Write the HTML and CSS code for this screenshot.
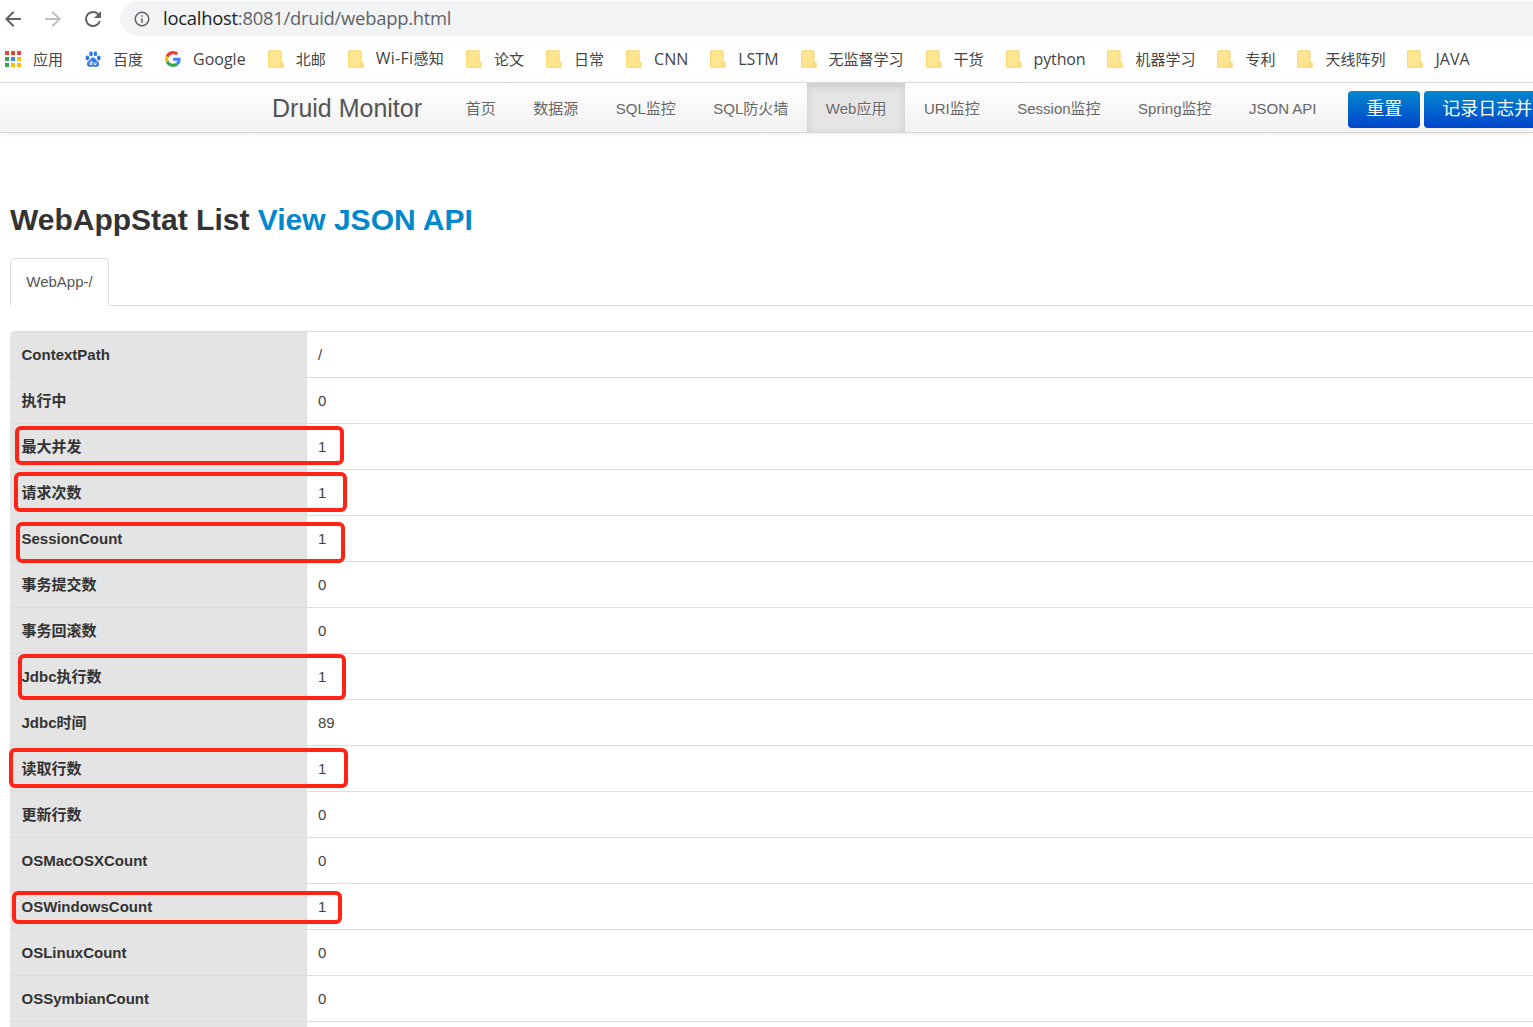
FILE: index.html
```html
<!DOCTYPE html>
<html lang="zh-CN">
<head>
<meta charset="utf-8">
<title>Druid Monitor</title>
<link rel="stylesheet" href="styles.css">
</head>
<body>
<svg class="defs" width="0" height="0">
  <symbol id="folder" viewBox="0 0 16 18">
    <path d="M1.500 .8h10.500a1 1 0 0 1 1 1v10.700h1.200a1 1 0 0 1 1 1v2.700a1 1 0 0 1-1 1H1.500a1 1 0 0 1-1-1V1.800a1 1 0 0 1 1-1z" fill="#fee591" stroke="#fad872" stroke-width="1.200"/>
    <path d="M13 12.500v4.500" stroke="#fad872" stroke-width="1.200" fill="none"/>
  </symbol>
</svg>
<header class="browser">
  <div class="toolbar">
    <svg class="tool-icon" viewBox="0 0 24 24"><path d="M20 11H7.800l5.600-5.600L12 4l-8 8 8 8 1.400-1.400L7.800 13H20z" fill="#5f6368"/></svg>
    <svg class="tool-icon" viewBox="0 0 24 24"><path d="M4 11h12.200l-5.600-5.600L12 4l8 8-8 8-1.400-1.400 5.600-5.600H4z" fill="#bdc1c6"/></svg>
    <svg class="tool-icon" viewBox="0 0 24 24"><path d="M17.650 6.350A7.950 7.950 0 0 0 12 4a8 8 0 1 0 7.730 10h-2.080A6 6 0 1 1 12 6c1.660 0 3.140.69 4.220 1.780L13 11h7V4z" fill="#5f6368"/></svg>
    <div class="omnibox">
      <svg class="info-icon" viewBox="0 0 24 24"><path d="M12 2a10 10 0 1 0 0 20 10 10 0 0 0 0-20zm0 18a8 8 0 1 1 0-16 8 8 0 0 1 0 16zM11 7h2v2h-2zm0 4h2v6h-2z" fill="#5f6368"/></svg>
      <span class="url"><span class="url-host">localhost</span>:8081/druid/webapp.html</span>
    </div>
  </div>
  <div class="bookmarks">
    <a class="bookmark">
      <svg class="bm-icon" viewBox="0 0 16 16">
        <rect x="0" y="0" width="4" height="4" fill="#ea4335"/><rect x="6" y="0" width="4" height="4" fill="#ea4335"/><rect x="12" y="0" width="4" height="4" fill="#ea4335"/>
        <rect x="0" y="6" width="4" height="4" fill="#34a853"/><rect x="6" y="6" width="4" height="4" fill="#4285f4"/><rect x="12" y="6" width="4" height="4" fill="#fbbc05"/>
        <rect x="0" y="12" width="4" height="4" fill="#34a853"/><rect x="6" y="12" width="4" height="4" fill="#fbbc05"/><rect x="12" y="12" width="4" height="4" fill="#fbbc05"/>
      </svg><span class="bm-label">应用</span></a>
    <a class="bookmark">
      <svg class="bm-icon" viewBox="0 0 16 16" fill="#2f78e8">
        <ellipse cx="2.400" cy="7" rx="1.900" ry="2.400"/><ellipse cx="6" cy="2.800" rx="1.800" ry="2.500"/><ellipse cx="10.400" cy="2.800" rx="1.800" ry="2.500"/><ellipse cx="13.800" cy="7" rx="1.900" ry="2.400"/>
        <path d="M8 6.500c-2 0-2.500 2-4 3.200C2.500 11 1.600 12 2 13.800c.4 1.500 2 2.200 3.500 2 1-.1 1.700-.4 2.500-.4s1.500.3 2.500.4c1.500.2 3.100-.5 3.500-2 .4-1.800-.5-2.800-2-4.100C10.500 8.500 10 6.500 8 6.500z"/>
        <path d="M6.800 9.500v4H5v-2h1.800M9 11.200v2.300h2v-2.300" fill="none" stroke="#fff" stroke-width=".9"/>
      </svg><span class="bm-label">百度</span></a>
    <a class="bookmark">
      <svg class="bm-icon" viewBox="0 0 48 48">
        <path fill="#ea4335" d="M24 9.500c3.500 0 6.700 1.300 9.200 3.400l6.800-6.800C35.900 2.400 30.300 0 24 0 14.600 0 6.500 5.400 2.600 13.200l7.900 6.200C12.400 13.700 17.700 9.500 24 9.500z"/>
        <path fill="#4285f4" d="M47 24.500c0-1.600-.1-3.100-.4-4.500H24v9h12.900c-.6 3-2.200 5.500-4.800 7.200l7.700 6c4.500-4.200 7.200-10.300 7.200-17.700z"/>
        <path fill="#fbbc05" d="M10.500 28.600c-.5-1.400-.8-3-.8-4.600s.3-3.200.8-4.600l-7.900-6.200C1 16.400 0 20.100 0 24s1 7.600 2.600 10.800z"/>
        <path fill="#34a853" d="M24 48c6.500 0 11.900-2.100 15.800-5.800l-7.700-6c-2.100 1.400-4.900 2.300-8.100 2.300-6.300 0-11.600-4.200-13.500-9.900l-7.900 6.200C6.500 42.600 14.600 48 24 48z"/>
      </svg><span class="latin">Google</span></a>
    <a class="bookmark"><svg class="bm-folder"><use href="#folder"/></svg><span class="bm-label">北邮</span></a>
    <a class="bookmark"><svg class="bm-folder"><use href="#folder"/></svg><span class="bm-label latin-mixed"><span class="latin-inner">Wi-Fi</span>感知</span></a>
    <a class="bookmark"><svg class="bm-folder"><use href="#folder"/></svg><span class="bm-label">论文</span></a>
    <a class="bookmark"><svg class="bm-folder"><use href="#folder"/></svg><span class="bm-label">日常</span></a>
    <a class="bookmark"><svg class="bm-folder"><use href="#folder"/></svg><span class="latin">CNN</span></a>
    <a class="bookmark"><svg class="bm-folder"><use href="#folder"/></svg><span class="latin">LSTM</span></a>
    <a class="bookmark"><svg class="bm-folder"><use href="#folder"/></svg><span class="bm-label">无监督学习</span></a>
    <a class="bookmark"><svg class="bm-folder"><use href="#folder"/></svg><span class="bm-label">干货</span></a>
    <a class="bookmark"><svg class="bm-folder"><use href="#folder"/></svg><span class="latin latin-tight">python</span></a>
    <a class="bookmark"><svg class="bm-folder"><use href="#folder"/></svg><span class="bm-label">机器学习</span></a>
    <a class="bookmark"><svg class="bm-folder"><use href="#folder"/></svg><span class="bm-label">专利</span></a>
    <a class="bookmark"><svg class="bm-folder"><use href="#folder"/></svg><span class="bm-label">天线阵列</span></a>
    <a class="bookmark"><svg class="bm-folder"><use href="#folder"/></svg><span class="latin">JAVA</span></a>
  </div>
</header>
<nav class="navbar">
  <span class="brand">Druid Monitor</span>
  <ul class="nav">
    <li>首页</li>
    <li>数据源</li>
    <li>SQL监控</li>
    <li>SQL防火墙</li>
    <li class="active">Web应用</li>
    <li>URI监控</li>
    <li>Session监控</li>
    <li>Spring监控</li>
    <li>JSON API</li>
  </ul>
  <div class="actions">
    <a class="btn">重置</a>
    <a class="btn">记录日志并重置</a>
  </div>
</nav>
<main class="content">
  <h2 class="title">WebAppStat List <a class="title-link">View JSON API</a></h2>
  <div class="tabs"><span class="tab">WebApp-/</span></div>
  <table class="stat">
    <tbody>
      <tr><th>ContextPath</th><td>/</td></tr>
      <tr><th class="cjk">执行中</th><td>0</td></tr>
      <tr><th class="cjk">最大并发</th><td>1</td></tr>
      <tr><th class="cjk">请求次数</th><td>1</td></tr>
      <tr><th>SessionCount</th><td>1</td></tr>
      <tr><th class="cjk">事务提交数</th><td>0</td></tr>
      <tr><th class="cjk">事务回滚数</th><td>0</td></tr>
      <tr><th class="cjk">Jdbc执行数</th><td>1</td></tr>
      <tr><th class="cjk">Jdbc时间</th><td>89</td></tr>
      <tr><th class="cjk">读取行数</th><td>1</td></tr>
      <tr><th class="cjk">更新行数</th><td>0</td></tr>
      <tr><th>OSMacOSXCount</th><td>0</td></tr>
      <tr><th>OSWindowsCount</th><td>1</td></tr>
      <tr><th>OSLinuxCount</th><td>0</td></tr>
      <tr><th>OSSymbianCount</th><td>0</td></tr>
      <tr><th>&nbsp;</th><td>&nbsp;</td></tr>
    </tbody>
  </table>
</main>
<div class="mark mark-1"></div>
<div class="mark mark-2"></div>
<div class="mark mark-3"></div>
<div class="mark mark-4"></div>
<div class="mark mark-5"></div>
<div class="mark mark-6"></div>
</body>
</html>
```
FILE: styles.css
```css
html, body {
  margin: 0;
  padding: 0;
  height: 1027px;
  overflow: hidden;
  background: #fff;
}
body {
  position: relative;
  font-family: "Liberation Sans", "Noto Sans CJK SC", sans-serif;
  color: #333;
}
.defs { position: absolute; }

/* browser chrome */
.browser { height: 82px; background: #fff; }
.toolbar {
  height: 38px;
  display: flex;
  align-items: center;
  padding-left: 1px;
  box-sizing: border-box;
}
.tool-icon { width: 24px; height: 24px; margin-right: 16px; flex: none; }
.omnibox {
  flex: 1;
  height: 35px;
  margin-left: -1px;
  margin-top: -1px;
  border-radius: 18px 0 0 18px;
  background: #f1f3f4;
  display: flex;
  align-items: center;
  padding-left: 13px;
}
.info-icon { width: 18px; height: 18px; margin-right: 12px; }
.url {
  font-family: "Open Sans", "Noto Sans", sans-serif;
  font-size: 18.400px;
  letter-spacing: -0.25px;
  color: #5f6368;
  white-space: nowrap;
  padding-bottom: 2px;
}
.url-host { color: #202124; }
.bookmarks {
  height: 42px;
  padding-bottom: 2px;
  display: flex;
  align-items: center;
  padding-left: 5px;
  gap: 22px;
}
.bookmark {
  display: flex;
  align-items: center;
  gap: 12px;
  font-family: "Open Sans", "Noto Sans CJK SC", sans-serif;
  font-size: 15px;
  color: #444;
  white-space: nowrap;
}
.bm-label { padding-bottom: 2px; }
.latin { font-size: 16px; }
.latin-inner { font-size: 16px; }
.latin-tight { letter-spacing: -.15px; }
.latin-mixed { letter-spacing: .3px; }
.bm-icon { width: 16px; height: 16px; flex: none; }
.bm-folder { width: 16px; height: 18px; flex: none; }

/* navbar */
.navbar {
  height: 49px;
  border-top: 1px solid #dadce0;
  border-bottom: 1px solid #d4d4d4;
  background: linear-gradient(#fff, #f2f2f2);
  box-shadow: 0 1px 6px rgba(0, 0, 0, .07);
  display: flex;
  align-items: stretch;
  padding-left: 272px;
  white-space: nowrap;
  overflow: hidden;
}
.brand {
  font-size: 25px;
  line-height: 50px;
  color: #555;
  width: 175px;
  flex: none;
}
.nav {
  list-style: none;
  margin: 0;
  padding: 0;
  display: flex;
  flex: none;
}
.nav li {
  padding: 1px 18.750px 0;
  font-size: 15px;
  line-height: 49px;
  color: #666;
  text-shadow: 0 1px 0 #fff;
}
.nav li.active {
  background: #e5e5e5;
  box-shadow: inset 0 3px 8px rgba(0, 0, 0, .125);
}
.actions {
  display: flex;
  align-items: center;
  gap: 4px;
  margin-left: 13px;
  flex: none;
}
.btn {
  height: 37px;
  line-height: 37px;
  padding: 0 18px;
  margin-top: 4px;
  font-size: 18px;
  color: #fff;
  border-radius: 4px;
  background: linear-gradient(#0088cc, #0044cc);
}

/* content */
.content { padding: 0 0 0 10px; }
.title {
  margin: 67px 0 18px;
  font-size: 30px;
  line-height: 40px;
  font-weight: bold;
  color: #333;
}
.title-link { color: #0088cc; }
.tabs {
  height: 47px;
  border-bottom: 1px solid #ddd;
  margin-bottom: 25px;
}
.tab {
  display: inline-block;
  box-sizing: border-box;
  width: 99px;
  height: 48px;
  line-height: 46px;
  text-align: center;
  font-size: 15px;
  color: #555;
  background: #fff;
  border: 1px solid #ddd;
  border-bottom-color: #fff;
  border-radius: 5px 5px 0 0;
}
.stat {
  width: 100%;
  border-collapse: separate;
  border-spacing: 0;
  table-layout: fixed;
  font-size: 15px;
}
.stat th, .stat td {
  height: 46px;
  box-sizing: border-box;
  padding: 0 11px;
  border-top: 1px solid #ddd;
  text-align: left;
  vertical-align: middle;
}
.stat th {
  width: 297px;
  padding-left: 11.500px;
  background: #e4e4e4;
  color: #333;
  font-weight: bold;
  border-right: 1px solid #ddd;
}
.stat th.cjk { padding-bottom: 2px; }
.stat tr:first-child th { border-top-left-radius: 5px; }
.stat td { color: #444; }

/* annotation boxes drawn over the screenshot */
.mark {
  position: absolute;
  box-sizing: border-box;
  border: 4px solid #ff2416;
  border-radius: 6px;
}
.mark-1 { left: 15px; top: 426px; width: 329px; height: 39px; }
.mark-2 { left: 14px; top: 472px; width: 333px; height: 40px; }
.mark-3 { left: 16px; top: 522px; width: 329px; height: 41px; }
.mark-4 { left: 18px; top: 654px; width: 328px; height: 46px; }
.mark-5 { left: 9px; top: 748px; width: 339px; height: 40px; }
.mark-6 { left: 12px; top: 891px; width: 330px; height: 33px; }
```
